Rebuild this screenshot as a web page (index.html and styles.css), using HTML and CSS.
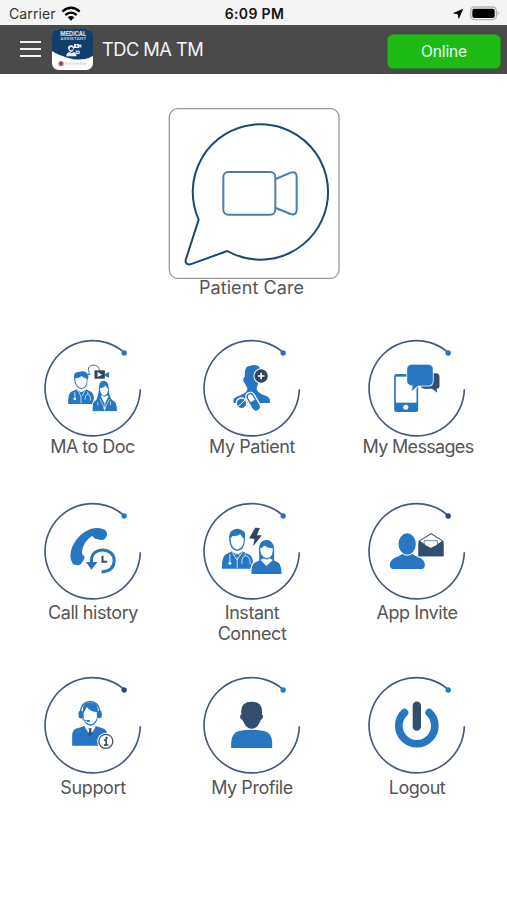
FILE: index.html
```html
<!DOCTYPE html>
<html lang="en">
<head>
<meta charset="utf-8">
<title>TDC MA TM</title>
<link rel="stylesheet" href="styles.css">
</head>
<body>
<svg class="defs" width="0" height="0" aria-hidden="true">
  <symbol id="ring" viewBox="-150 -150 300 300">
    <path d="M143 4A143 143 0 1 1 94 -107" fill="none" stroke="#435a78" stroke-width="5"/>
    <circle cx="94.500" cy="-105" r="8" fill="currentColor"/>
  </symbol>
</svg>
<div class="status">
  <div class="carrier"><span>Carrier</span>
    <svg width="20" height="15" viewBox="0 0 60 45"><g fill="none" stroke="#000" stroke-width="7"><path d="M4 17Q30 -6 56 17"/><path d="M13 27Q30 13 47 27"/></g><path d="M20 34Q30 26 40 34L30 44Z"/></svg>
  </div>
  <div class="time">6:09 PM</div>
  <div class="power">
    <svg width="12" height="12" viewBox="0 0 36 36"><path d="M34 2L20 34L17 19L2 16Z"/></svg>
    <svg width="30" height="15" viewBox="0 0 90 45"><rect x="2" y="3" width="77" height="38" rx="11" fill="#f4f4f4" stroke="#b4b4b4" stroke-width="4"/><rect x="7" y="8" width="67" height="28" rx="6"/><path d="M83 15Q90 22 83 29Z" fill="#aaa"/></svg>
  </div>
</div>
<header class="bar">
  <div class="menu"><i></i><i></i><i></i></div>
  <svg class="logo" width="41" height="41" viewBox="0 0 123 123">
    <rect width="123" height="123" rx="20" fill="#fff"/>
    <path d="M0 66V20Q0 0 20 0H103Q123 0 123 20V80Q95 97 58 89Q20 80 0 66Z" fill="#123e6b"/>
    <text class="logo-main" x="64" y="22" text-anchor="middle" textLength="78" lengthAdjust="spacingAndGlyphs">MEDICAL</text>
    <text class="logo-sub" x="64" y="34" text-anchor="middle" textLength="78" lengthAdjust="spacingAndGlyphs">ASSISTANT</text>
    <g fill="#e5eef5"><path d="M43 82Q43 70 54 69L59 73L65 69Q73 71 74 82Z"/><path d="M48 57Q49 48 58 49Q67 49 66 58Q64 69 57 69Q50 68 48 57Z"/><path d="M66 45H82V57H66ZM82 49L88 46V56L82 53Z"/><path d="M71 65H83V75H71Z"/></g>
    <circle cx="58" cy="59" r="5" fill="#123e6b"/><path d="M72 48L79 51L72 54ZM74 68H80V71H74Z" fill="#123e6b"/>
    <circle cx="27" cy="104" r="8" fill="#c56f82"/><circle cx="27" cy="104" r="4" fill="#345789"/>
    <path d="M39 104H104" stroke="#dcd8df" stroke-width="7" stroke-dasharray="9 2"/>
  </svg>
  <h1>TDC MA TM</h1>
  <button class="online">Online</button>
</header>
<main>
  <section class="care">
    <svg class="care-box" width="172" height="171" viewBox="24 24 516 513" fill="none" stroke-linejoin="round">
      <rect x="28" y="26" width="509" height="509" rx="25" stroke="#999" stroke-width="4"/>
      <path d="M116 359A203 203 0 1 1 202 453L91 493Q75 495 77 480Z" stroke="#1c4875" stroke-width="6"/>
      <g stroke="#4681ad" stroke-width="6"><rect x="190" y="216" width="156" height="128" rx="15"/><path d="M347 237L392 218Q409 212 410 230V330Q409 347 392 342L347 324"/></g>
    </svg>
    <p class="label">Patient Care</p>
  </section>
  <section class="grid row1">
    <div class="item">
      <svg class="icon blue" viewBox="-149 -150 300 300"><use href="#ring" x="-150" y="-150" width="300" height="300"/>
        <g transform="translate(-172.500 -174)">
          <path d="M166 132L160 135L162 127Q154 106 175 105Q191 106 193 121" fill="none" stroke="#2678bf" stroke-width="3"/>
          <rect x="178" y="121" width="31" height="25" fill="#2d4361"/><path d="M187 126L201 134L187 141Z" fill="#fff"/><path d="M209 132L222 126V143L209 138Z" fill="#2678bf"/>
          <g fill="#2676c1"><path d="M99 222Q98 187 111 184L126 178Q138 195 151 178L165 184Q176 188 176 206L173 222Z"/><path d="M117 148Q113 124 131 126Q149 119 158 133Q162 140 157 151Q157 176 138 177Q119 174 117 148Z"/></g>
          <path d="M120 145Q133 145 139 138Q147 145 155 146Q155 173 138 174Q121 172 120 145Z" fill="#fff"/>
          <path d="M126 178L137 198L138 220M151 178L141 198M119 186V204M158 185V193M150 209Q150 193 158 193Q166 193 166 211" fill="none" stroke="#d8e9f7" stroke-width="2.500"/><circle cx="119" cy="207" r="4" fill="#fff"/>
          <path d="M171 245Q169 211 182 210Q190 193 190 170Q192 151 206 151Q221 153 222 173Q222 197 231 209Q247 211 247 245Z" fill="#2676c1" stroke="#fff" stroke-width="3"/>
          <path d="M194 174Q207 176 212 166Q214 175 219 176Q218 195 206 197Q195 193 194 174ZM197 199L209 222L220 199L215 196Q207 204 201 196Z" fill="#fff"/>
          <path d="M195 207L208 236L223 207M188 216V227M226 214V226M209 222V243" fill="none" stroke="#e7f3fc" stroke-width="2"/><circle cx="208" cy="235" r="3" fill="#fff"/>
        </g></svg>
      <p class="label tight">MA to Doc</p>
    </div>
    <div class="item">
      <svg class="icon blue" viewBox="-149 -150 300 300"><use href="#ring" x="-150" y="-150" width="300" height="300"/>
        <g transform="translate(-169.500 -174)">
          <path d="M115 219V207Q118 202 139 194Q154 188 157 176L149 160Q143 156 145 144L149 140Q147 107 164 108Q177 101 190 109Q197 112 195 135Q197 152 188 162L184 176Q188 189 208 196Q223 201 224 209V219Z" fill="#2676c1"/>
          <circle cx="198" cy="138" r="23" fill="#fff"/><circle cx="198" cy="138" r="20" fill="#32435b"/><path d="M188 138H208M198 128V148" stroke="#fff" stroke-width="5"/>
          <g transform="rotate(-30 175 214)"><rect x="160" y="184" width="27" height="61" rx="13.500" fill="#2676c1" stroke="#fff" stroke-width="4"/><path d="M166 212V199Q166 190 174 190Q181 190 181 199V212Z" fill="#fff"/></g>
          <circle cx="139" cy="220" r="16" fill="#2676c1" stroke="#fff" stroke-width="4"/><path d="M128 230L151 209" stroke="#fff" stroke-width="3"/>
        </g></svg>
      <p class="label">My Patient</p>
    </div>
    <div class="item">
      <svg class="icon blue" viewBox="-149 -150 300 300"><use href="#ring" x="-150" y="-150" width="300" height="300"/>
        <g transform="translate(-184.500 -174)">
          <rect x="117" y="132" width="72" height="114" rx="7" fill="#2676c1"/><path d="M122 140H184V218H122Z" fill="#fff"/><circle cx="152" cy="232" r="7.500" fill="#fff"/>
          <path d="M225 130H243Q253 130 253 141V168Q253 176 244 176L246 188L231 176H207Q197 176 197 166Z" fill="#314e6e"/>
          <path d="M170 105H219Q232 105 232 118V153Q232 166 219 166H189L171 181L174 166Q157 166 157 153V118Q157 105 170 105Z" fill="#2676c1" stroke="#fff" stroke-width="7"/><path d="M170 105H219Q232 105 232 118V153Q232 166 219 166H189L171 181L174 166Q157 166 157 153V118Q157 105 170 105Z" fill="#2676c1" stroke="#2676c1" stroke-width="2"/>
        </g></svg>
      <p class="label tighter">My Messages</p>
    </div>
  </section>
  <section class="grid row2">
    <div class="item">
      <svg class="icon bright" viewBox="-149 -150 300 300"><use href="#ring" x="-150" y="-150" width="300" height="300"/>
        <g transform="translate(-172.500 -168)">
          <path d="M113 207Q99 185 112 153Q130 115 168 101Q188 96 203 102Q216 106 216 119L211 129Q207 137 194 134L181 131Q174 129 172 122Q151 134 143 158Q138 174 143 180Q150 183 147 192L139 205Q132 216 113 207Z" fill="#2676c1"/>
          <path d="M169 201V194C170 154 237 156 237 196Q237 229 199 231" fill="none" stroke="#2676c1" stroke-width="9"/><path d="M152 201H187L169 224Z" fill="#2676c1"/><path d="M202 182V200H216" fill="none" stroke="#304967" stroke-width="6"/>
        </g></svg>
      <p class="label">Call history</p>
    </div>
    <div class="item">
      <svg class="icon blue" viewBox="-149 -150 300 300"><use href="#ring" x="-150" y="-150" width="300" height="300"/>
        <g transform="translate(-169.500 -168)">
          <path d="M180 98L162 130L178 132L174 154L200 121H185L194 99Z" fill="#30455f"/>
          <g fill="#2676c1"><path d="M80 221Q80 182 93 178L110 169Q126 186 142 169L158 177Q173 181 174 205L167 221Z"/><path d="M102 136Q99 110 114 105Q129 96 143 107Q153 110 149 135Q149 165 126 168Q104 164 102 136Z"/></g>
          <path d="M106 132L111 123Q127 125 135 117L146 132Q146 160 126 164Q107 160 106 132Z" fill="#fff"/>
          <path d="M110 170L125 195L143 170M118 181L126 173L134 182M126 186V219M104 177V202M150 175V180M140 207Q139 184 151 182Q166 184 165 208" fill="none" stroke="#e6f2fc" stroke-width="2.500"/><circle cx="104" cy="205" r="4.500" fill="#e6f2fc"/>
          <path d="M167 239Q166 202 181 200L190 195Q191 185 189 162Q190 133 215 132Q238 136 239 162V195L248 200Q261 205 261 239Z" fill="#2676c1" stroke="#fff" stroke-width="4"/>
          <path d="M195 160L205 152L232 155Q237 187 214 190Q195 184 195 160ZM196 195L214 213L233 195L223 190Q214 197 206 190Z" fill="#fff"/>
          <path d="M201 142L235 151L232 160Q215 160 209 150L197 162Z" fill="#2676c1"/>
        </g></svg>
      <p class="label">Instant<br>Connect</p>
    </div>
    <div class="item">
      <svg class="icon navy" viewBox="-149 -150 300 300"><use href="#ring" x="-150" y="-150" width="300" height="300"/>
        <g transform="translate(-184.500 -168)" fill="#2676c1">
          <ellipse cx="156" cy="147" rx="26" ry="32"/><path d="M104 209Q105 192 130 184L141 177Q156 187 171 177L187 186Q209 192 209 209Q209 222 199 222H114Q104 221 104 209Z"/>
          <path d="M190 138L228 114L265 138V184H190Z" fill="#314e6e"/><path d="M195 138L228 118L260 138L239 153H216Z" fill="#fff"/><path d="M207 148V137H247V148L227 160Z" fill="#fff" stroke="#314e6e" stroke-width="2"/><path d="M190 144L227 160L265 144V184H190Z" fill="#314e6e"/><path d="M211 151V141H243V151L227 157Z" fill="#fff"/>
        </g></svg>
      <p class="label">App Invite</p>
    </div>
  </section>
  <section class="grid row3">
    <div class="item">
      <svg class="icon navy" viewBox="-149 -150 300 300"><use href="#ring" x="-150" y="-150" width="300" height="300"/>
        <g transform="translate(-172.500 -165)">
          <path d="M111 227V197Q111 175 132 173L147 168L165 188L182 168L198 173Q218 176 219 205V227Z" fill="#2676c1"/>
          <path d="M136 127C137 83 193 83 194 127" fill="none" stroke="#2676c1" stroke-width="4"/>
          <path d="M143 117Q143 97 165 97Q188 98 188 117V141Q184 166 165 167Q147 164 143 141Z" fill="#2676c1"/><rect x="130" y="122" width="15" height="23" rx="7" fill="#2676c1"/><rect x="185" y="122" width="15" height="23" rx="7" fill="#2676c1"/>
          <path d="M145 130L155 111Q166 126 185 126V145Q178 163 165 163Q151 161 146 145Z" fill="#fff"/><path d="M137 143Q145 153 158 153" fill="none" stroke="#2676c1" stroke-width="2.500"/><ellipse cx="160" cy="153" rx="6" ry="3" fill="#2676c1"/>
          <path d="M149 172L165 196L181 172L173 169L165 174L157 169Z" fill="#fff"/><path d="M160 175H170L168 182L172 194L165 201L158 194L162 182Z" fill="#2b5687"/>
          <circle cx="212" cy="214" r="26" fill="#fff"/><circle cx="212" cy="214" r="21" fill="none" stroke="#43536a" stroke-width="4"/><circle cx="214" cy="204" r="3.500" fill="#263b57"/><path d="M206 210H213V225M206 225H219" fill="none" stroke="#263b57" stroke-width="4.500"/>
        </g></svg>
      <p class="label loose">Support</p>
    </div>
    <div class="item">
      <svg class="icon bright" viewBox="-149 -150 300 300"><use href="#ring" x="-150" y="-150" width="300" height="300"/>
        <g transform="translate(-169.500 -165)">
          <path d="M139 134Q133 95 169 95Q205 95 200 134Q206 134 202 145Q200 150 197 149Q191 174 169 177Q149 174 142 149Q134 148 135 137Q136 133 139 134Z" fill="#314e6e"/>
          <path d="M108 234V217Q109 190 131 183Q169 175 207 183Q231 190 231 217V234Z" fill="#2676c1"/>
          <path d="M144 156Q151 178 169 178Q188 178 195 156" fill="none" stroke="#fff" stroke-width="2"/>
        </g></svg>
      <p class="label">My Profile</p>
    </div>
    <div class="item">
      <svg class="icon bright" viewBox="-149 -150 300 300"><use href="#ring" x="-150" y="-150" width="300" height="300"/>
        <g transform="translate(-184.500 -165)" fill="none" stroke-linecap="round">
          <path d="M148 128A54 54 0 1 0 222 128" stroke="#2676c1" stroke-width="23"/><path d="M185 107V170" stroke="#314e6e" stroke-width="25"/>
        </g></svg>
      <p class="label">Logout</p>
    </div>
  </section>
</main>
</body>
</html>
```
FILE: styles.css
```css
* { box-sizing: border-box; }
body { margin: 0; width: 507px; height: 900px; overflow: hidden; background: #fff; font-family: Inter, "Liberation Sans", sans-serif; }
svg { display: block; flex: none; }
.defs { height: 0; }
.status { display: grid; grid-template-columns: 1fr auto 1fr; align-items: center; height: 25px; padding: 2px 7px 0 9px; background: #f4f4f4; color: #111; font-size: 14px; }
.carrier { display: flex; align-items: center; gap: 5px; color: #333; letter-spacing: 0.1px; }
.time { font-weight: 600; font-size: 14px; letter-spacing: 0.35px; }
.power { display: flex; justify-content: flex-end; align-items: center; gap: 6px; }
.bar { display: flex; align-items: center; height: 49px; padding: 0 6px 0 20px; background: #4a4a4a; color: #f4f4f4; }
.menu { display: flex; flex-direction: column; gap: 5px; width: 21px; margin: -2px 11px 0 0; }
.menu i { height: 2px; background: #f2f2f2; }
.logo-main { font-size: 17px; font-weight: 700; fill: #dfeaf4; }
.logo-sub { font-size: 12px; font-weight: 600; fill: #b8cbdc; }
h1 { flex: 1; margin: -1px 0 0 9px; font-size: 18.3px; font-weight: 400; letter-spacing: -0.55px; white-space: nowrap; }
.online { width: 114px; height: 35px; margin-top: 4px; padding: 0; border: 1px solid #278c21; border-radius: 6px; background: #1dbb13; color: #f0fff0; font: 400 15.5px Inter, sans-serif; letter-spacing: -0.15px; }
.care { display: flex; flex-direction: column; align-items: center; padding-top: 34px; height: 264px; }
.care-box { margin-left: 1px; }
.label { margin: 0; padding-left: 1px; color: #555; font-size: 18px; line-height: 21px; letter-spacing: -0.45px; text-align: center; white-space: nowrap; }
.tight { padding-left: 0; letter-spacing: -0.52px; }
.tighter { padding-left: 3px; letter-spacing: -0.68px; }
.loose { letter-spacing: -0.35px; }
.care .label { margin: -2px 0 0 -4px; padding-left: 0; letter-spacing: 0.08px; }
.grid { display: grid; grid-template-columns: 159px 159px 171px; margin-left: 13px; }
.item { display: flex; flex-direction: column; align-items: center; }
.icon { width: 100px; height: 100px; }
.blue { color: #2d6fc0; }
.bright { color: #1d7bc9; }
.navy { color: #2c4a70; }
.row1 { height: 163px; }
.row2 { height: 174px; }
.row1 .label { margin-top: -2px; }
.row2 .label { margin-top: 1px; }
.row3 .label { margin-top: 2px; }
```
